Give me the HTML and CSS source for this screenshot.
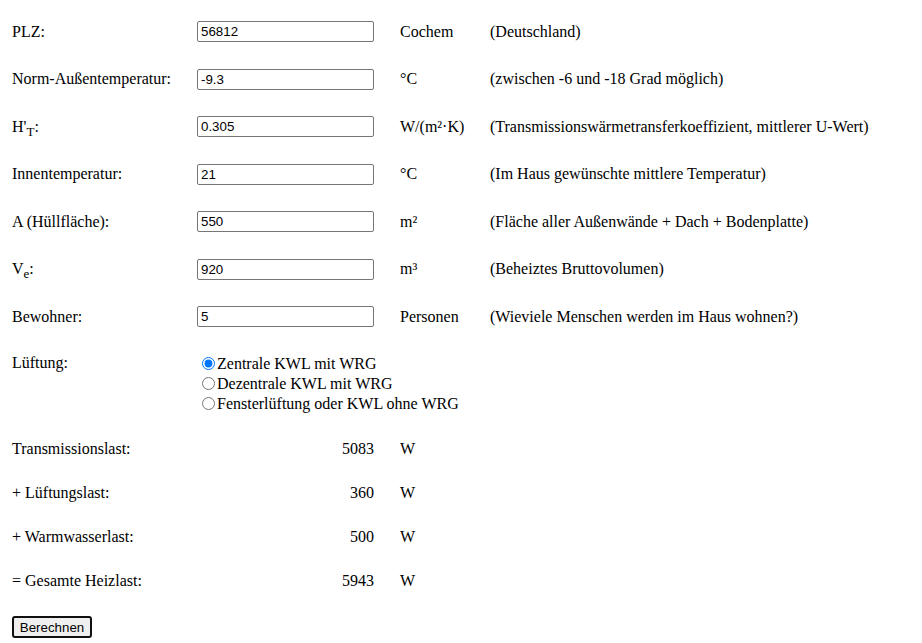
FILE: index.html
```html
<!DOCTYPE html>
<html lang="de">
<head>
  <meta charset="UTF-8" />
  <title>Heizlastrechner</title>
  <link rel="stylesheet" href="styles.css">
</head>
<body>
  <form id="calcForm" class="calc">
    <div class="row">
      <label for="plz">PLZ:</label>
      <div><input type="text" id="plz" value="56812" /></div>
      <span>Cochem</span>
      <span>(Deutschland)</span>
    </div>

    <div class="row">
      <label for="tAussen">Norm-Außentemperatur:</label>
      <div><input type="text" id="tAussen" value="-9.3" /></div>
      <span>°C</span>
      <span>(zwischen -6 und -18 Grad möglich)</span>
    </div>

    <div class="row">
      <label for="ht">H'<sub>T</sub>:</label>
      <div><input type="text" id="ht" value="0.305" /></div>
      <span>W/(m²·K)</span>
      <span>(Transmissionswärmetransferkoeffizient, mittlerer U-Wert)</span>
    </div>

    <div class="row">
      <label for="tInnen">Innentemperatur:</label>
      <div><input type="text" id="tInnen" value="21" /></div>
      <span>°C</span>
      <span>(Im Haus gewünschte mittlere Temperatur)</span>
    </div>

    <div class="row">
      <label for="area">A (Hüllfläche):</label>
      <div><input type="text" id="area" value="550" /></div>
      <span>m²</span>
      <span>(Fläche aller Außenwände + Dach + Bodenplatte)</span>
    </div>

    <div class="row">
      <label for="vol">V<sub>e</sub>:</label>
      <div><input type="text" id="vol" value="920" /></div>
      <span>m³</span>
      <span>(Beheiztes Bruttovolumen)</span>
    </div>

    <div class="row">
      <label for="people">Bewohner:</label>
      <div><input type="text" id="people" value="5" /></div>
      <span>Personen</span>
      <span>(Wieviele Menschen werden im Haus wohnen?)</span>
    </div>

    <div class="row row-radio">
      <span>Lüftung:</span>
      <div class="radios">
        <label><input type="radio" name="vent" value="zentral" checked />Zentrale KWL mit WRG</label>
        <label><input type="radio" name="vent" value="dezentral" />Dezentrale KWL mit WRG</label>
        <label><input type="radio" name="vent" value="fenster" />Fensterlüftung oder KWL ohne WRG</label>
      </div>
    </div>

    <div class="row result">
      <span>Transmissionslast:</span>
      <span class="num" id="outTrans">5083</span>
      <span>W</span>
    </div>

    <div class="row result">
      <span>+ Lüftungslast:</span>
      <span class="num" id="outVent">360</span>
      <span>W</span>
    </div>

    <div class="row result">
      <span>+ Warmwasserlast:</span>
      <span class="num" id="outWater">500</span>
      <span>W</span>
    </div>

    <div class="row result">
      <span>= Gesamte Heizlast:</span>
      <span class="num" id="outTotal">5943</span>
      <span>W</span>
    </div>

    <button type="submit" class="calc-btn">Berechnen</button>
  </form>
</body>
</html>
```

FILE: styles.css
```css
body {
  margin: 8px 0 0 0;
  padding: 0 12px;
  font-family: "Liberation Serif", "Times New Roman", serif;
  font-size: 16px;
  color: #000;
  background: #fff;
}

.row {
  display: grid;
  grid-template-columns: 185px 203px 90px auto;
  align-items: center;
  height: 47.5px;
}

.row input[type="text"] {
  box-sizing: border-box;
  width: 177px;
  height: 21px;
  padding: 1px 3px;
  border: 1px solid #767676;
  border-radius: 2px;
  font-family: "Liberation Sans", Arial, sans-serif;
  font-size: 13.33px;
  display: block;
}

sub {
  font-size: 13px;
  line-height: 0;
}

.row-radio {
  height: auto;
  align-items: start;
  padding: 13.5px 0 12.5px;
}

.radios {
  grid-column: 2 / span 3;
  white-space: nowrap;
}

.radios label {
  display: block;
  height: 20px;
  line-height: 20px;
}

.radios input {
  margin: 0 2px 0 5px;
  width: 13px;
  height: 13px;
  vertical-align: -1px;
}

.result {
  height: 44px;
}

.result .num {
  text-align: right;
  padding-right: 26px;
}

.calc-btn {
  margin-top: 13.5px;
  box-sizing: border-box;
  width: 80px;
  height: 22px;
  padding: 0;
  background: #efefef;
  border: 2px solid #101010;
  border-radius: 3px;
  font-family: "Liberation Sans", Arial, sans-serif;
  font-size: 13.33px;
  color: #000;
}
```
